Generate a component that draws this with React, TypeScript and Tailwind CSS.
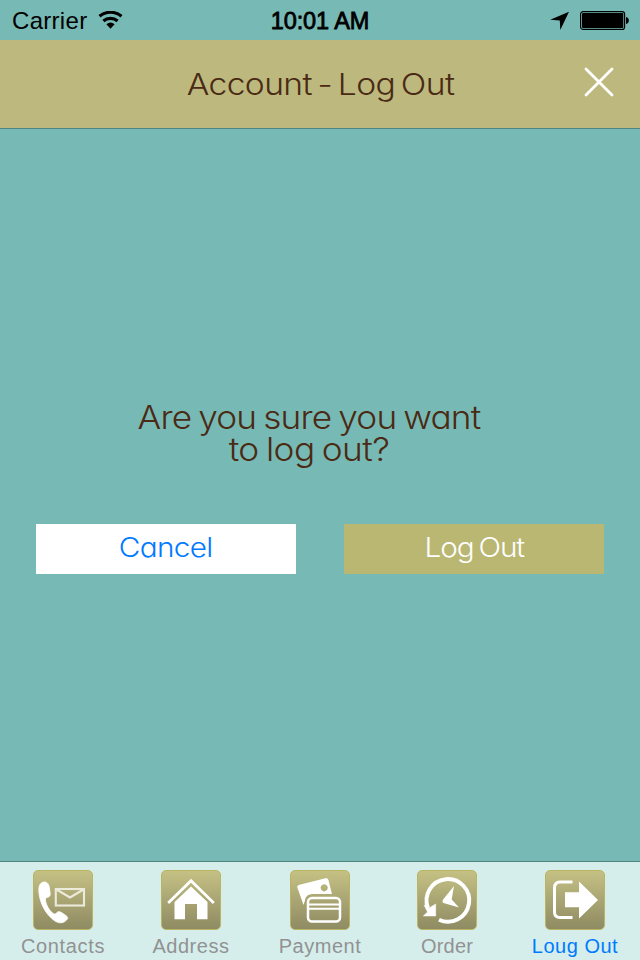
import type { ReactNode } from 'react';

const gothic =
  "font-['Inter',sans-serif] font-light [font-feature-settings:'cv11','ss03']";
const helvetica = "font-['Liberation_Sans',sans-serif]";

function WifiIcon() {
  return (
    <svg className="mt-[11px] ml-[11px] h-[18px] w-[26px]" viewBox="0 0 26 18">
      <path d="M1.5 5.3a17 17 0 0 1 22 0" fill="none" stroke="#000" strokeWidth="3.2" />
      <path d="M5.4 10a11 11 0 0 1 14.2 0" fill="none" stroke="#000" strokeWidth="3.2" />
      <path d="M8.4 13.3a6.3 6.3 0 0 1 8.200 0L12.500 17.800z" fill="#000" />
    </svg>
  );
}

function StatusBar() {
  return (
    <div className={`grid h-10 grid-cols-3 text-black ${helvetica}`}>
      <div className="flex pl-3">
        <span className="mt-[5px] text-[24px] leading-8 tracking-[0.3px]">Carrier</span>
        <WifiIcon />
      </div>
      <div className="mt-[5px] text-center text-[23.5px] leading-8 tracking-[-0.1px] whitespace-nowrap [-webkit-text-stroke:0.8px_#000]">
        10:01 AM
      </div>
      <div className="flex justify-end pr-[10px]">
        <svg className="mt-[11px] h-5 w-5" viewBox="0 0 20 20">
          <path d="M19 .8 10.300 19 9.800 9.400.2 8.800z" fill="#000" />
        </svg>
        <svg className="mt-[11px] ml-[10px] h-[19px] w-[50px]" viewBox="0 0 50 19">
          <rect x="0.6" y="0.6" width="44" height="17.8" rx="2.5" fill="none" stroke="#000" strokeWidth="1.2" />
          <rect x="2" y="2" width="41.3" height="15" rx="1" fill="#000" />
          <path d="M46 6c3.8.5 3.8 6.500 0 7z" fill="#000" />
        </svg>
      </div>
    </div>
  );
}

const tabs: { label: string; icon: ReactNode; active?: boolean; shift: string; tracking: string }[] = [
  {
    label: 'Contacts',
    shift: 'pr-[2px]',
    tracking: 'tracking-[0.65px]',
    icon: (
      <>
        <path
          d="M10.500 12C6 13 5.500 18 6 23c1 10 6 20 14 26.500 4 3.500 9 4.500 12.500 1.500 2.500-2 3-3.500 1-5l-5-3.500c-2-1.300-4-1-5 .5-1 1.300-2.500 1.300-4 0-3.500-3-6-7.500-7-12-.4-2 .3-3.300 2-3.800 2.300-.6 3-1.700 2.700-4l-.9-6C15.800 13.500 13.500 11.500 10.500 12z"
          fill="#fff"
          stroke="#fff"
          strokeWidth="0.8"
        />
        <rect x="22.800" y="19" width="28.200" height="16.500" fill="none" stroke="#eceada" strokeWidth="2.100" />
        <path d="m23.500 19.500 13.500 8 13.500-8" fill="none" stroke="#eceada" strokeWidth="2.100" />
      </>
    ),
  },
  {
    label: 'Address',
    shift: 'pr-[2px]',
    tracking: 'tracking-[0.55px]',
    icon: (
      <>
        <path d="M7.200 33 30 10.800 52.800 33" fill="none" stroke="#fff" strokeWidth="2.800" />
        <path d="M30 16.500 46.500 32v17.300H36V34H24v15.300H13.500V32z" fill="#fff" />
      </>
    ),
  },
  {
    label: 'Payment',
    shift: '',
    tracking: 'tracking-[0.5px]',
    icon: (
      <>
        <path
          d="M9.500 14.800 35.500 8.200c1.500-.3 2.500.3 3 2L42 24H23.500c-5 0-8 2-8.500 6.500L13.500 35 7.300 17.500c-.3-1.500.5-2.300 2.200-2.700zM34.200 14.200a3.600 3.600 0 1 0 .01 0z"
          fill="#fff"
          fillRule="evenodd"
        />
        <rect x="18" y="28" width="32" height="23.500" rx="4" fill="none" stroke="#fff" strokeWidth="2.500" />
        <path d="M18 34.500h32M18 38.800h32" stroke="#fff" strokeWidth="2.100" />
      </>
    ),
  },
  {
    label: 'Order',
    shift: 'pr-[2px]',
    tracking: 'tracking-[0.2px]',
    icon: (
      <>
        <path d="M11 38A21.300 21.300 0 1 1 22 49.700" fill="none" stroke="#fff" strokeWidth="4" />
        <path d="M6.300 46 10.500 42 7 35l5 3 6.700-4v12z" fill="#fff" stroke="#fff" strokeWidth="0.500" />
        <path d="M37 16 34.700 29.500 42 37.500 26.500 33q-2-1.500 0-4z" fill="#fff" />
      </>
    ),
  },
  {
    label: 'Loug Out',
    active: true,
    shift: 'pr-[2px]',
    tracking: 'tracking-[0.5px]',
    icon: (
      <>
        <path d="M27.500 12H15Q9.500 12 9.500 18v24q0 5.500 5.500 5.500h12.500" fill="none" stroke="#fff" strokeWidth="3" />
        <path d="M20 22.300h14V11.500L53 30 34 48.500V37.300H20z" fill="#fff" />
      </>
    ),
  },
];

export default function App() {
  return (
    <div className="flex h-[960px] w-[640px] flex-col overflow-hidden bg-[#77bab5]">
      <StatusBar />
      <header className="grid h-[89px] grid-cols-[1fr_auto_1fr] items-center border-b border-[#4f8585] bg-[#bdb97e]">
        <span />
        <h1
          className={`scale-x-112 pb-px text-[30px] leading-9 tracking-[-0.55px] whitespace-nowrap text-[#4a2a14] [word-spacing:-2.8px] ${gothic}`}
        >
          Account - Log Out
        </h1>
        <button aria-label="Close" className="mr-[26px] mb-1 justify-self-end">
          <svg className="h-[30px] w-[30px]" viewBox="0 0 30 30">
            <path d="m2 2 26 26M28 2 2 28" stroke="#fff" strokeWidth="2.800" strokeLinecap="round" />
          </svg>
        </button>
      </header>
      <main className="flex flex-1 flex-col px-9 pt-[273px]">
        <p
          className={`mr-[22px] scale-x-110 text-center text-[32px] leading-8 tracking-[-0.75px] whitespace-nowrap text-[#4a2a14] [word-spacing:-1.9px] ${gothic}`}
        >
          Are you sure you want
          <br />
          <span className="tracking-[-0.5px]">to log out?</span>
        </p>
        <div className="mt-[58px] grid grid-cols-2 gap-12">
          <button className="h-[50px] bg-white pb-[2px]">
            <span className={`inline-block scale-x-110 text-[27px] leading-8 tracking-[-0.6px] text-[#007aff] ${gothic}`}>
              Cancel
            </span>
          </button>
          <button className="h-[50px] bg-[#bab772] pb-[2px]">
            <span
              className={`inline-block scale-x-110 text-[27px] leading-8 tracking-[-1px] text-white [word-spacing:-2px] ${gothic}`}
            >
              Log Out
            </span>
          </button>
        </div>
      </main>
      <nav className="grid h-[99px] grid-cols-5 border-t border-[#4f8580] bg-[#d5eeec]">
        {tabs.map((tab) => (
          <div key={tab.label} className={`flex flex-col items-center pt-2 ${tab.shift}`}>
            <div className="h-[60px] w-[60px] overflow-hidden rounded-[5px] border border-[#bbb563] bg-linear-to-b from-[#c5c184] to-[#8f8b63]">
              <svg className="-m-px h-[60px] w-[60px]" viewBox="0 0 60 60">
                {tab.icon}
              </svg>
            </div>
            <span
              className={`mt-1 text-[20px] leading-6 whitespace-nowrap ${helvetica} ${tab.tracking} ${tab.active ? 'text-[#007aff]' : 'text-[#929292]'}`}
            >
              {tab.label}
            </span>
          </div>
        ))}
      </nav>
    </div>
  );
}
